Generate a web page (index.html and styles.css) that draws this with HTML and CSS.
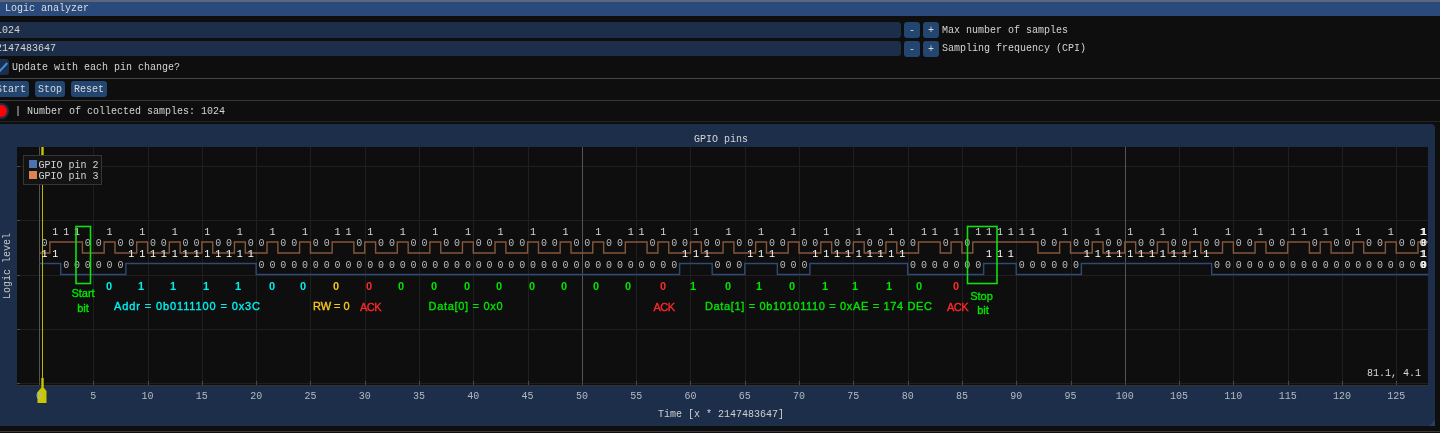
FILE: index.html
```html
<!DOCTYPE html>
<html>
<head>
    <meta charset="UTF-8">
    <meta name="viewport" content="width=device-width, initial-scale=1.0">
    <title>Logic analyzer</title>
    <link rel="stylesheet" href="styles.css">
</head>
<body>
    <div class="window">
        <header class="titlebar">Logic analyzer</header>
        <div class="settings">
            <div class="field-row">
                <input class="field" type="text" value="1024">
                <button class="step">-</button>
                <button class="step">+</button>
                <label>Max number of samples</label>
            </div>
            <div class="field-row">
                <input class="field" type="text" value="2147483647">
                <button class="step">-</button>
                <button class="step">+</button>
                <label>Sampling frequency (CPI)</label>
            </div>
            <div class="check-row">
                <span class="checkbox">
                    <svg width="17" height="16" viewBox="0 0 17 16"><path d="M5 15 L15.3 4" class="tick"/></svg>
                </span>
                <label>Update with each pin change?</label>
            </div>
        </div>
        <hr class="sep">
        <div class="actions">
            <button class="action">Start</button>
            <button class="action">Stop</button>
            <button class="action">Reset</button>
        </div>
        <hr class="sep sep-dim">
        <div class="status">
            <span class="led-box"><span class="led"></span></span>
            <span class="status-text">| Number of collected samples: 1024</span>
        </div>
        <hr class="sep sep-faint">
        <section class="panel">
            <h2 class="panel-title">GPIO pins</h2>
            <div class="panel-body">
                <div class="y-label">Logic level</div>
                <svg id="plot" width="1418" height="279" viewBox="17 147 1418 279"></svg>
            </div>
            <span class="grip"></span>
        </section>
        <hr class="sep sep-bottom">
    </div>
    <script src="plot.js"></script>
</body>
</html>
```

FILE: styles.css
```css
html, body {
    margin: 0;
    padding: 0;
    height: 433px;
    overflow: hidden;
    background-color: #0e0e0e;
}

body {
    font-family: "Liberation Mono", monospace;
    font-size: 10px;
    color: #d4d4d4;
}

.window {
    margin-left: -8px;
    width: 1448px;
    border-top: 2px solid #5d6678;
    will-change: transform;
}

.titlebar {
    height: 14px;
    line-height: 14px;
    padding-left: 13px;
    background-color: #294a7a;
    color: #dcdcdc;
}

.settings {
    display: flex;
    flex-direction: column;
    gap: 3px;
    padding-top: 6px;
}

.field-row,
.check-row {
    display: flex;
    align-items: center;
    height: 15.7px;
}

.field-row label {
    padding-top: 1px;
}

.field-row + .field-row label {
    padding-top: 0;
}

.check-row label {
    padding-top: 1px;
}

.field {
    width: 909px;
    height: 100%;
    box-sizing: border-box;
    margin: 0 3px 0 0;
    padding: 1px 4px 0;
    border: 0;
    border-radius: 3px;
    background-color: #1c2e4a;
    color: #d4d4d4;
    font: inherit;
}

.field-row + .field-row .field {
    padding-top: 0;
}

.step {
    width: 16px;
    height: 16px;
    margin: 0 3px 0 0;
    padding: 1px 0 0;
    border: 0;
    border-radius: 3px;
    background-color: #234671;
    color: #d8d8d8;
    font: inherit;
}

.checkbox {
    display: block;
    width: 17px;
    height: 16px;
    margin-right: 3px;
    border-radius: 3px;
    background-color: #1c2e4a;
}

.checkbox svg {
    display: block;
}

.tick {
    stroke: #3a8ce0;
    stroke-width: 2;
    fill: none;
}

.sep {
    height: 1px;
    margin: 3px 0 2px;
    border: 0;
    background-color: #45454d;
}

.sep-dim {
    background-color: #36363c;
}

.sep-faint {
    margin: 2px 0;
    background-color: #232326;
}

.sep-bottom {
    margin: 5px 0 0;
    background-color: #3a3a3e;
}

.actions {
    display: flex;
    gap: 6px;
    margin-left: 1px;
}

.action {
    height: 16px;
    padding: 1px 3px 0;
    border: 0;
    border-radius: 3px;
    background-color: #234671;
    color: #d8d8d8;
    font: inherit;
}

.status {
    display: flex;
    align-items: center;
    gap: 6px;
    height: 16px;
}

.status-text {
    padding-top: 1px;
}

.led-box {
    display: flex;
    align-items: center;
    justify-content: center;
    width: 17px;
    height: 16px;
    border-radius: 8px;
    background-color: #1c2e4a;
}

.led {
    display: block;
    width: 12px;
    height: 12px;
    border-radius: 50%;
    background-color: #f00;
}

.panel {
    position: relative;
    width: 1443px;
    height: 302px;
    border-radius: 4px;
    background-color: #1c2e4a;
}

.panel-title {
    margin: 0;
    height: 23px;
    padding: 10px 0 0 15px;
    box-sizing: border-box;
    line-height: 12px;
    text-align: center;
    font-size: 10px;
    font-weight: normal;
    color: #d4d4d4;
}

.panel-body {
    display: flex;
    align-items: flex-start;
}

.y-label {
    width: 12px;
    height: 238px;
    margin: 0 3px 0 10px;
    line-height: 12px;
    text-align: center;
    writing-mode: vertical-rl;
    transform: rotate(180deg);
    color: #c8c8c8;
}

#plot {
    display: block;
    flex: none;
}

.grip {
    position: absolute;
    right: 0;
    bottom: 0;
    width: 0;
    height: 0;
    border-style: solid;
    border-width: 0 0 6px 6px;
    border-color: transparent transparent #24406a transparent;
}

/* plot contents, drawn from plot.js */
.plot-bg { fill: #0e0e0e; }
.grid { stroke: #1f1f1f; stroke-width: 1; }
.grid-major { stroke: #555; stroke-width: 1; }
.axis { stroke: #333; stroke-width: 1; }
.tick-mark { stroke: #4a4a4a; stroke-width: 1; }

.trace { fill: none; stroke-width: 1.4; }
.trace-pin2 { stroke: #2f4a76; }
.trace-pin3 { stroke: #86573a; }

.mono { font-family: "Liberation Mono", monospace; font-size: 10px; text-anchor: middle; }
.tick-label { fill: #b4bac4; }
.sample { fill: #bdbdbd; }
.sample-one { fill: #d8d8d8; }
.sample-bright { fill: #fff; }
.axis-title { fill: #cfcfcf; }
.coords { fill: #d8d8d8; text-anchor: end; }

.legend-box { fill: #131313; stroke: #353535; stroke-width: 1; }
.legend-label { fill: #d4d4d4; text-anchor: start; }
.swatch-pin2 { fill: #4c72b0; }
.swatch-pin3 { fill: #dd8452; }

.note { font-family: "Liberation Sans", sans-serif; font-size: 11px; stroke-width: 0.35; }
.note-mid { text-anchor: middle; }
.bit { font-weight: bold; font-size: 11px; text-anchor: middle; stroke-width: 0; }
.cyan { fill: #00f0f0; stroke: #00f0f0; }
.gold { fill: #f8c81c; stroke: #f8c81c; }
.red { fill: #ff2a2a; stroke: #ff2a2a; }
.green { fill: #00e600; stroke: #00e600; }
.marker { fill: none; stroke: #0fe00f; stroke-width: 1.6; }

.cursor { stroke: #b8b800; stroke-width: 1; }
.cursor-thick { stroke: #c8c800; stroke-width: 2.4; }
.cursor-tag { fill: #c8c800; }
```

FILE: plot.js
```js
const plot = document.getElementById("plot");
const NS = "http://www.w3.org/2000/svg";

const PLOT = { left: 17, right: 1428, top: 147, bottom: 385 };
const xOf = t => 39 + 10.858 * t;

// [start, end] sample ranges where each pin reads high
const pin3High = [[1,4],[6,7],[9,10],[12,13],[15,16],[18,19],[21,22],[24,25],[27,29],[30,31],
    [33,34],[36,37],[39,40],[42,43],[45,46],[48,49],[51,52],[54,56],[57,58],[60,61],[63,64],
    [66,67],[69,70],[72,73],[75,76],[78,79],[81,83],[84,85],[86,92],[94,95],[97,98],[100,101],
    [103,104],[106,107],[109,110],[112,113],[115,117],[118,119],[121,122],[124,125],[127,128]];
const pin2High = [[0,2],[8,20],[59,62],[65,68],[71,80],[87,90],[96,108]];

const SAMPLES = 127;

function add(name, attrs, text) {
    const el = document.createElementNS(NS, name);
    Object.keys(attrs).forEach(key => el.setAttribute(key, attrs[key]));
    if (text !== undefined) el.textContent = text;
    plot.appendChild(el);
    return el;
}

function label(x, y, text, cls, extra) {
    // y is the vertical middle of the text
    return add("text", Object.assign({ x: x, y: y + 3.5, class: cls }, extra || {}), text);
}

function isHigh(ranges, t) {
    return ranges.some(r => t >= r[0] && t < r[1]);
}

function drawGrid() {
    add("rect", { x: PLOT.left, y: PLOT.top, width: PLOT.right - PLOT.left, height: PLOT.bottom - PLOT.top, class: "plot-bg" });

    [166.5, 220.5, 275.5, 329.5, 383.5].forEach(y => {
        add("line", { x1: PLOT.left, x2: PLOT.right, y1: y, y2: y, class: "grid" });
        add("line", { x1: PLOT.left, x2: PLOT.left + 3, y1: y, y2: y, class: "tick-mark" });
    });

    for (let t = 0; t <= 125; t += 5) {
        const x = Math.round(xOf(t)) + 0.5;
        const major = t % 50 === 0;
        add("line", { x1: x, x2: x, y1: PLOT.top, y2: PLOT.bottom, class: major ? "grid-major" : "grid" });
        add("line", { x1: x, x2: x, y1: PLOT.bottom - 4, y2: PLOT.bottom, class: "tick-mark" });
    }

    add("line", { x1: PLOT.left - 0.5, x2: PLOT.left - 0.5, y1: PLOT.top, y2: PLOT.bottom + 1, class: "axis" });
    add("line", { x1: PLOT.left, x2: PLOT.right, y1: PLOT.bottom + 0.5, y2: PLOT.bottom + 0.5, class: "axis" });

    label(721, 413, "Time [x * 2147483647]", "mono axis-title");
    label(1421, 372.5, "81.1, 4.1", "mono coords");
}

function drawTickLabels() {
    for (let t = 0; t <= 125; t += 5) {
        label(xOf(t), 395, String(t), "mono tick-label");
    }
}

function drawTrace(ranges, yHigh, yLow, cls) {
    let d = "";
    let last = null;
    for (let t = 0; t <= SAMPLES; t++) {
        const y = isHigh(ranges, t) ? yHigh : yLow;
        const x = xOf(t);
        if (last === null) d += `M${x} ${y}`;
        else if (y !== last) d += `L${x} ${last}L${x} ${y}`;
        last = y;
    }
    d += `L${PLOT.right} ${last}`;
    add("path", { d: d, class: `trace ${cls}` });
}

function drawSamples() {
    for (let t = 0; t <= SAMPLES; t++) {
        const x = xOf(t + 0.5);
        if (isHigh(pin3High, t)) label(x, 231, "1", "mono sample-one");
        else label(x, 242, "0", "mono sample");

        if (isHigh(pin2High, t)) label(x, 253, "1", "mono sample-bright");
        else label(x, 264, "0", "mono sample");
    }

    // the last samples pile up on top of each other at the plot edge
    [[231, "1"], [242, "0"], [253, "1"], [264, "0"]].forEach(row => {
        label(xOf(127.5) - 0.6, row[0], row[1], "mono sample-bright");
        label(xOf(127.5) + 0.6, row[0], row[1], "mono sample-bright");
    });
}

function drawLegend() {
    add("rect", { x: 23.5, y: 155.5, width: 78, height: 29, class: "legend-box" });
    add("rect", { x: 29, y: 160, width: 8, height: 8, class: "swatch-pin2" });
    add("rect", { x: 29, y: 171, width: 8, height: 8, class: "swatch-pin3" });
    label(38.5, 164, "GPIO pin 2", "mono legend-label");
    label(38.5, 175, "GPIO pin 3", "mono legend-label");
}

function drawNotes() {
    const bits = [
        [109, "0", "cyan"], [141, "1", "cyan"], [173, "1", "cyan"], [206, "1", "cyan"], [238, "1", "cyan"],
        [272, "0", "cyan"], [303, "0", "cyan"], [336, "0", "gold"], [369, "0", "red"],
        [401, "0", "green"], [434, "0", "green"], [467, "0", "green"], [499, "0", "green"],
        [532, "0", "green"], [564, "0", "green"], [596, "0", "green"], [628, "0", "green"], [663, "0", "red"],
        [693, "1", "green"], [728, "0", "green"], [759, "1", "green"], [792, "0", "green"], [825, "1", "green"],
        [855, "1", "green"], [889, "1", "green"], [919, "0", "green"], [956, "0", "red"]
    ];
    bits.forEach(b => label(b[0], 286, b[1], `note bit ${b[2]}`));

    const notes = [
        [114, 306, 146, "Addr = 0b0111100 = 0x3C", "cyan"],
        [313, 306, 36.5, "RW = 0", "gold"],
        [360, 307, 21.5, "ACK", "red"],
        [428.5, 306, 74, "Data[0] = 0x0", "green"],
        [653.5, 307, 21.5, "ACK", "red"],
        [705, 306, 227, "Data[1] = 0b10101110 = 0xAE = 174 DEC", "green"],
        [947, 307, 21.5, "ACK", "red"]
    ];
    notes.forEach(n => label(n[0], n[1], n[3], `note ${n[4]}`, { textLength: n[2], lengthAdjust: "spacing" }));

    add("rect", { x: 76, y: 226.5, width: 14.5, height: 57, class: "marker" });
    add("rect", { x: 967.5, y: 226.5, width: 29.5, height: 57, class: "marker" });

    label(83, 293, "Start", "note note-mid green");
    label(83, 308, "bit", "note note-mid green");
    label(981.5, 296.5, "Stop", "note note-mid green");
    label(983, 310.5, "bit", "note note-mid green");
}

function drawCursor() {
    add("line", { x1: 42.5, x2: 42.5, y1: PLOT.top, y2: 388, class: "cursor" });
    add("line", { x1: 42.5, x2: 42.5, y1: PLOT.top, y2: 155, class: "cursor-thick" });
    add("line", { x1: 42.5, x2: 42.5, y1: 378, y2: 390, class: "cursor-thick" });
    add("path", { d: "M37.5 403 L37.5 392 L41 388 L44 388 L46.5 391 L46.5 403 Z", class: "cursor-tag" });
}

drawGrid();
drawTrace(pin3High, 242, 253, "trace-pin3");
drawTrace(pin2High, 263.5, 274.5, "trace-pin2");
drawCursor();
drawTickLabels();
drawSamples();
drawLegend();
drawNotes();
```
